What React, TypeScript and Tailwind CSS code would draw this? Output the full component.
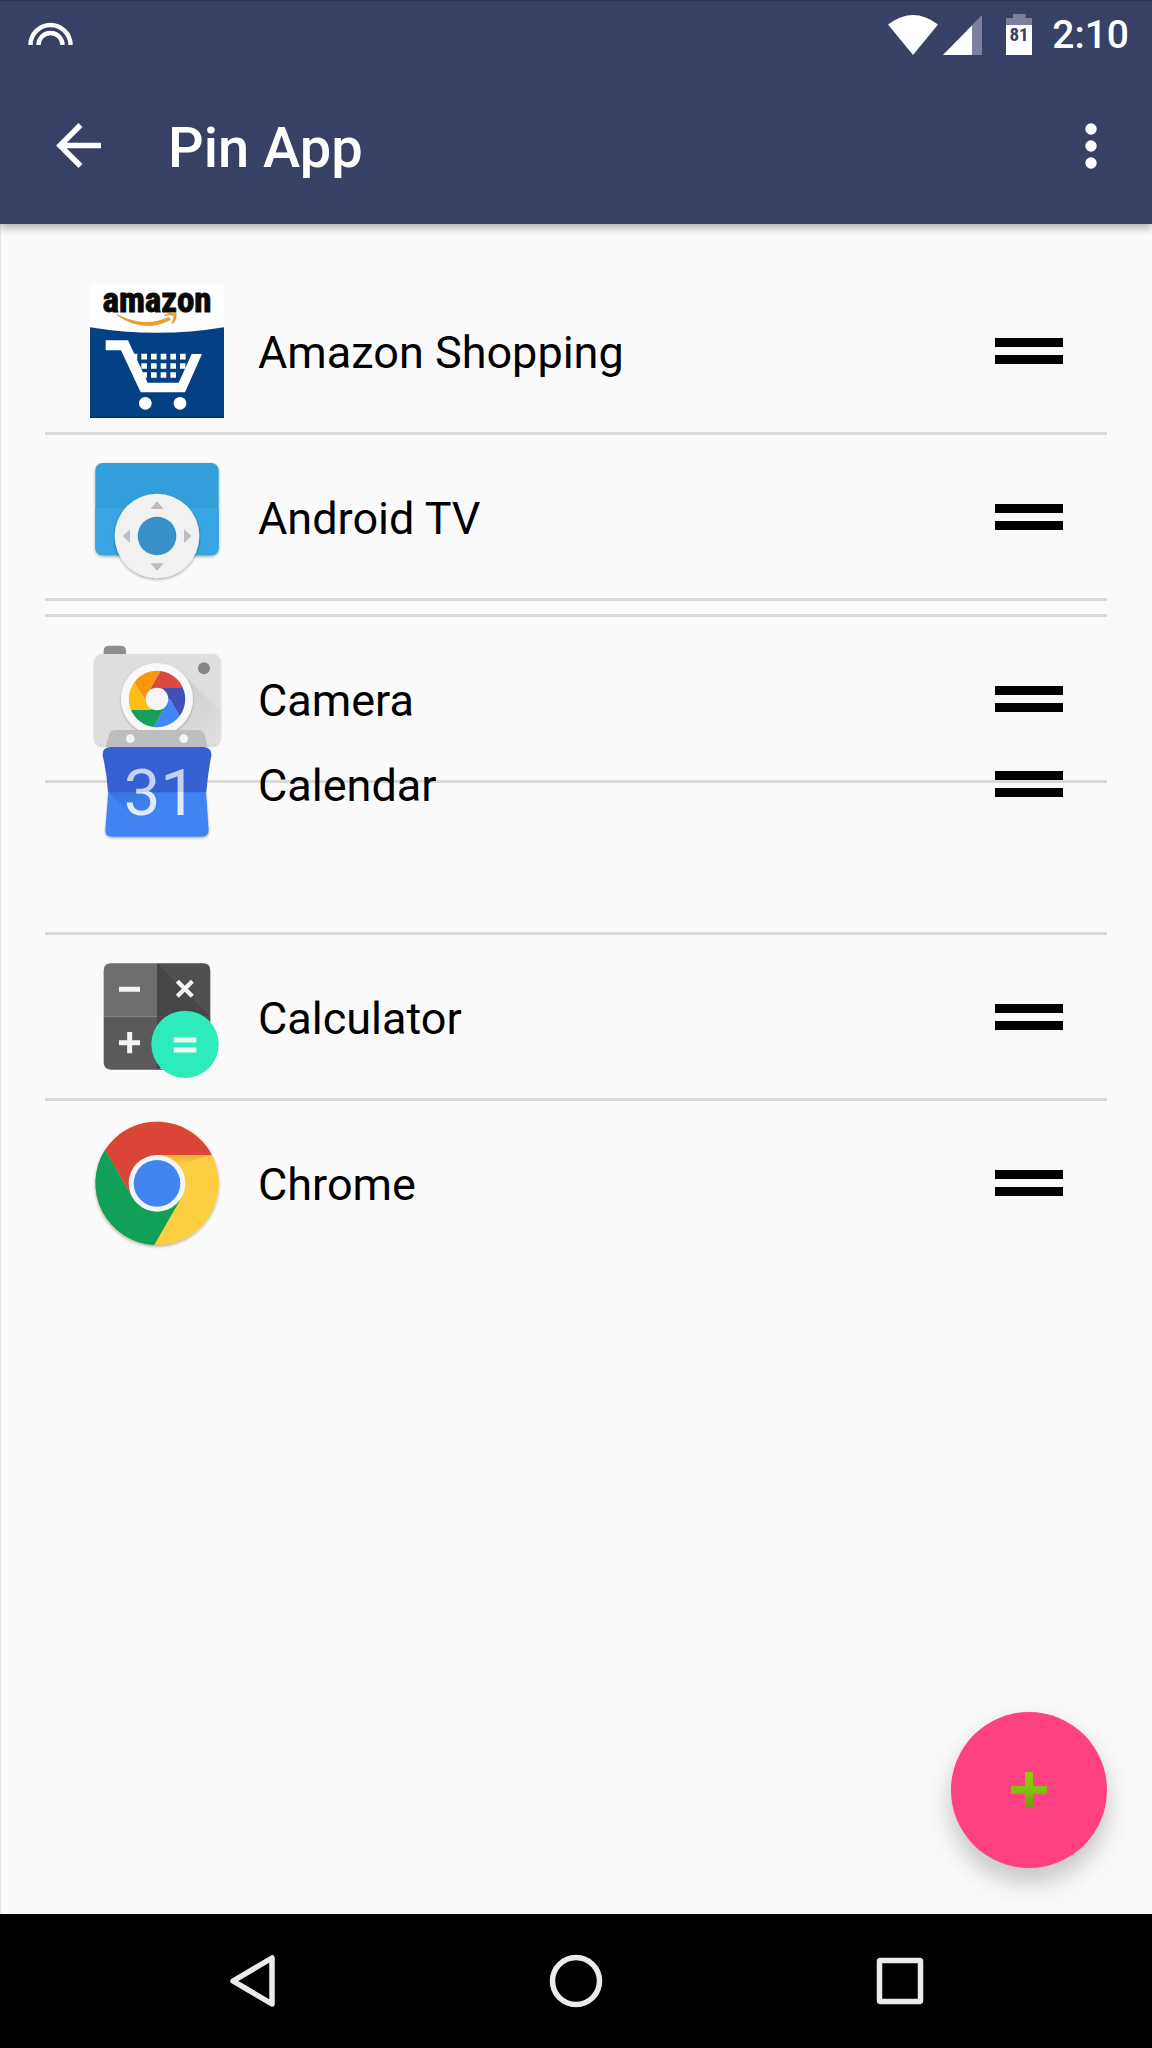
import { useState } from "react";
import type { ReactNode } from "react";

type PinnedApp = {
  id: string;
  name: string;
  icon: ReactNode;
};

const iconClass = "size-[134px] shrink-0 overflow-visible";

function AmazonIcon() {
  return (
    <svg viewBox="150 39 402 402" className={iconClass} aria-hidden="true">
      <rect x="150" y="39" width="402" height="402" fill="#fff" />
      <path d="M150 169 Q351 202 552 169 V441 H150 Z" fill="#044184" />
      <path d="M150 439 H552" stroke="#03295c" strokeWidth="4" />
      <text
        x="351"
        y="122"
        textAnchor="middle"
        fontSize="105"
        fontWeight="700"
        fill="#0a0a0a"
        stroke="#0a0a0a"
        strokeWidth="3"
        style={{ fontFamily: '"Roboto Condensed", Roboto, sans-serif' }}
      >
        amazon
      </text>
      <path d="M231 129 Q312 172 386 138 L393 146 Q309 190 231 133 Z" fill="#e9a02f" />
      <path d="M372 132 Q396 119 410 127 Q412 144 399 159 L394 156 Q402 142 400 134 Q390 131 373 136 Z" fill="#e9a02f" />
      <path d="M197 208 H264 L323 335 H416 L455 249 H486 L435 364 H302 L243 238 H197 Z" fill="#fff" />
      <path
        d="M275 257 H440 M304 285 H436 M304 312 H410"
        stroke="#fff"
        strokeWidth="17"
        strokeDasharray="17 12"
      />
      <circle cx="316" cy="397" r="19" fill="#fff" />
      <circle cx="420" cy="397" r="19" fill="#fff" />
    </svg>
  );
}

function AndroidTvIcon() {
  return (
    <svg viewBox="150 60 402 402" className={iconClass} aria-hidden="true">
      <defs>
        <filter id="tv-shadow" x="-20%" y="-20%" width="140%" height="140%">
          <feDropShadow dx="0" dy="4" stdDeviation="4" floodOpacity="0.35" />
        </filter>
      </defs>
      <rect x="166" y="99" width="370" height="277" rx="22" fill="#329fda" filter="url(#tv-shadow)" />
      <path d="M166 238 H536 V354 Q536 376 514 376 H188 Q166 376 166 354 Z" fill="#36a5e2" />
      <path d="M166 237 H536" stroke="#58b4e6" strokeWidth="2" />
      <circle cx="351" cy="318" r="127" fill="#f1f1f1" filter="url(#tv-shadow)" />
      <circle cx="351" cy="318" r="58" fill="#3891c6" />
      <path
        d="M351 214 L371 237 H331 Z M351 422 L371 400 H331 Z M248 318 L270 298 V339 Z M454 318 L432 298 V339 Z"
        fill="#bdbdbd"
      />
    </svg>
  );
}

const blades = ["#db4a3f", "#3f51b5", "#4286f5", "#16a05c", "#fbc012", "#fb9410"];

function CameraIcon() {
  return (
    <svg viewBox="150 4 402 402" className={iconClass} aria-hidden="true">
      <defs>
        <filter id="camera-shadow" x="-20%" y="-20%" width="140%" height="140%">
          <feDropShadow dx="0" dy="3" stdDeviation="3" floodOpacity="0.3" />
        </filter>
        <linearGradient id="camera-shade" x1="400" y1="200" x2="510" y2="330" gradientUnits="userSpaceOnUse">
          <stop offset="0" stopColor="#d0d0d0" />
          <stop offset="1" stopColor="#dedede" />
        </linearGradient>
      </defs>
      <path d="M191 74 V61 Q191 45 207 45 H242 Q258 45 258 61 V74 Z" fill="#8e8e8e" />
      <rect x="163" y="70" width="378" height="274" rx="24" fill="#dedede" filter="url(#camera-shadow)" />
      <path d="M428 129 L541 240 V320 Q541 344 517 344 H480 L300 295 Z" fill="url(#camera-shade)" />
      <circle cx="492" cy="113" r="18" fill="#858585" />
      <circle cx="351" cy="205" r="108" fill="#f8f8f8" filter="url(#camera-shadow)" />
      {blades.map((color, index) => (
        <path
          key={color}
          d="M351 205 L332 172 L361 121 A85 85 0 0 1 429 172 L370 172 Z"
          fill={color}
          transform={`rotate(${index * 60} 351 205)`}
        />
      ))}
      <circle cx="351" cy="205" r="34" fill="#f5f5f5" />
    </svg>
  );
}

function CalendarIcon() {
  return (
    <svg viewBox="150 260 402 402" className={iconClass} aria-hidden="true">
      <defs>
        <linearGradient id="calendar-digits" x1="0" y1="415" x2="0" y2="555" gradientUnits="userSpaceOnUse">
          <stop offset="0.5" stopColor="#c3d2f4" />
          <stop offset="0.5" stopColor="#e0ebfd" />
        </linearGradient>
        <linearGradient id="calendar-fold" x1="205" y1="484" x2="290" y2="590" gradientUnits="userSpaceOnUse">
          <stop offset="0" stopColor="#3a73dd" />
          <stop offset="1" stopColor="#4183f3" />
        </linearGradient>
        <filter id="calendar-shadow" x="-20%" y="-20%" width="140%" height="140%">
          <feDropShadow dx="0" dy="4" stdDeviation="3" floodOpacity="0.3" />
        </filter>
      </defs>
      <path d="M197 350 L206 316 Q211 299 228 299 H472 Q490 299 495 316 L503 350 Z" fill="#bebebe" />
      <circle cx="271" cy="325" r="13" fill="#f4f4f4" />
      <circle cx="431" cy="325" r="13" fill="#f4f4f4" />
      <path
        d="M205 484 L196 598 Q195 619 216 619 H484 Q507 619 506 598 L498 484 Z"
        fill="#4183f3"
        filter="url(#calendar-shadow)"
      />
      <path d="M205 484 L305 584 L400 484 Z" fill="url(#calendar-fold)" />
      <path d="M210 350 H492 Q516 352 514 376 Q504 425 499 486 H204 Q200 425 188 376 Q186 352 210 350 Z" fill="#3460d1" />
      <text
        x="251"
        y="555"
        fontSize="196"
        fill="url(#calendar-digits)"
        style={{ fontFamily: "Roboto, sans-serif" }}
      >
        31
      </text>
    </svg>
  );
}

function CalculatorIcon() {
  return (
    <svg viewBox="150 88 402 402" className={iconClass} aria-hidden="true">
      <path d="M351 128 V288 H191 V150 Q191 128 213 128 Z" fill="#6e6e6e" />
      <path d="M351 128 H489 Q511 128 511 150 V288 H351 Z" fill="#505050" />
      <path d="M351 128 L511 288 H351 Z" fill="#464646" />
      <path d="M191 288 H351 V447 H213 Q191 447 191 425 Z" fill="#5a5a5a" />
      <path d="M237 206 H300 M237 366 H300 M269 334 V398" stroke="#f4f4f4" strokeWidth="15" />
      <path d="M412 182 L457 227 M457 182 L412 227" stroke="#f4f4f4" strokeWidth="13" />
      <path d="M351 288 H511 V371 L351 447 Z" fill="#484848" />
      <path d="M351 440 V447 H372 Z" fill="#484848" />
      <circle cx="435" cy="371" r="101" fill="#2eebbb" />
      <path d="M401 358 H469 M401 388 H469" stroke="#e3fdf6" strokeWidth="15" />
    </svg>
  );
}

function ChromeIcon() {
  const sectors = ["#db4538", "#fece42", "#10a05a"];
  return (
    <svg viewBox="150 76 402 402" className={iconClass} aria-hidden="true">
      <defs>
        <filter id="chrome-shadow" x="-20%" y="-20%" width="140%" height="140%">
          <feDropShadow dx="0" dy="4" stdDeviation="4" floodOpacity="0.35" />
        </filter>
        <linearGradient id="chrome-fade" x1="0" y1="193" x2="0" y2="222" gradientUnits="userSpaceOnUse">
          <stop offset="0" stopColor="#e9b235" />
          <stop offset="1" stopColor="#fece42" />
        </linearGradient>
      </defs>
      <circle cx="351" cy="278" r="185" fill="#fece42" filter="url(#chrome-shadow)" />
      {sectors.map((color, index) => (
        <path
          key={color}
          d="M351 278 L277 320 L195 178 A186 186 0 0 1 516 193 L351 193 Z"
          fill={color}
          transform={`rotate(${index * 120} 351 278)`}
        />
      ))}
      <path d="M365 193 H514 L415 224 Z" fill="url(#chrome-fade)" />
      <circle cx="351" cy="278" r="85" fill="#f3f5f7" />
      <circle cx="351" cy="278" r="70" fill="#4384f3" />
    </svg>
  );
}

const apps: Record<string, PinnedApp> = {
  amazon: { id: "amazon", name: "Amazon Shopping", icon: <AmazonIcon /> },
  tv: { id: "tv", name: "Android TV", icon: <AndroidTvIcon /> },
  camera: { id: "camera", name: "Camera", icon: <CameraIcon /> },
  calendar: { id: "calendar", name: "Calendar", icon: <CalendarIcon /> },
  calculator: { id: "calculator", name: "Calculator", icon: <CalculatorIcon /> },
  chrome: { id: "chrome", name: "Chrome", icon: <ChromeIcon /> },
};

function AppRow({ app }: { app: PinnedApp }) {
  return (
    <div className="flex h-[163px] items-center pr-11 pl-[45px]">
      {app.icon}
      <span className="ml-[34px] flex-1 pt-1 text-[45px] leading-[56px] text-black">{app.name}</span>
      <button type="button" aria-label={`Move ${app.name}`} className="flex w-[68px] flex-col gap-2 py-4">
        <span className="h-[9px] w-full bg-black" />
        <span className="h-[9px] w-full bg-black" />
      </button>
    </div>
  );
}

function StatusBar() {
  return (
    <div className="flex h-[67px] items-start justify-between pr-[23px] pl-7">
      <svg viewBox="0 0 45 23" className="mt-[22px] h-[23px] w-[45px]" fill="none" stroke="#fff" strokeWidth="4.4" aria-hidden="true">
        <path d="M2.5 23 A20 20 0 0 1 42.5 23" />
        <path d="M10.5 23 A12 12 0 0 1 34.5 23" />
      </svg>
      <div className="flex items-center pt-[10px]">
        <svg viewBox="0 0 50 40" className="h-10 w-[50px]" aria-hidden="true">
          <path d="M0 9.5 Q25 -9.5 50 9.5 L25 40 Z" fill="#fff" />
        </svg>
        <svg viewBox="0 0 39 40" className="ml-[5px] h-10 w-[39px]" aria-hidden="true">
          <path d="M39 0 V40 H0 Z" fill="#7d7f9c" />
          <path d="M29 10.5 V40 H0 Z" fill="#fff" />
        </svg>
        <svg viewBox="0 0 26 41" className="ml-6 h-[41px] w-[26px]" aria-hidden="true">
          <path d="M7 0 H19.5 V4 H26 V11 H0 V4 H7 Z" fill="#7d7f9c" />
          <path d="M0 11 H26 V41 H0 Z" fill="#fff" />
          <text
            x="13"
            y="27"
            textAnchor="middle"
            fontSize="19"
            fontWeight="700"
            fill="#394064"
            style={{ fontFamily: '"Roboto Condensed", Roboto, sans-serif' }}
          >
            81
          </text>
        </svg>
        <span className="ml-5 pt-px text-[39px] leading-[48px] font-medium">2:10</span>
      </div>
    </div>
  );
}

function AppBar() {
  return (
    <div className="flex h-[157px] items-center pr-11 pl-14">
      <button type="button" aria-label="Back">
        <svg viewBox="0 0 45 45" className="size-[45px]" fill="none" stroke="#fff" strokeWidth="5.5" aria-hidden="true">
          <path d="M45 22.5 H5 M24.5 2 L4 22.5 L24.5 43" />
        </svg>
      </button>
      <h1 className="ml-[67px] flex-1 pt-1 text-[56px] leading-[68px] font-medium">Pin App</h1>
      <button type="button" aria-label="More options" className="px-[11px]">
        <svg viewBox="0 0 12 46" className="h-[46px] w-3" fill="#fff" aria-hidden="true">
          <circle cx="6" cy="6" r="5.7" />
          <circle cx="6" cy="23" r="5.7" />
          <circle cx="6" cy="40" r="5.7" />
        </svg>
      </button>
    </div>
  );
}

function NavigationBar() {
  return (
    <nav className="grid h-[134px] grid-cols-3 place-items-center bg-black px-[90px]">
      <button type="button" aria-label="Back">
        <svg viewBox="0 0 54 54" className="size-[54px]" fill="none" stroke="#ebebeb" strokeWidth="5.5" strokeLinejoin="round" aria-hidden="true">
          <path d="M47 4 V50 L8 27 Z" />
        </svg>
      </button>
      <button type="button" aria-label="Home">
        <svg viewBox="0 0 54 54" className="size-[54px]" fill="none" stroke="#ebebeb" strokeWidth="5.5" aria-hidden="true">
          <circle cx="27" cy="27" r="23.5" />
        </svg>
      </button>
      <button type="button" aria-label="Recent apps">
        <svg viewBox="0 0 54 54" className="size-[54px]" fill="none" stroke="#ebebeb" strokeWidth="5.5" aria-hidden="true">
          <rect x="6.500" y="6.500" width="41" height="41" rx="1" />
        </svg>
      </button>
    </nav>
  );
}

export default function App() {
  const [dragged] = useState<PinnedApp>(apps.calendar);

  return (
    <div className="relative flex min-h-screen flex-col bg-[#fafafa] font-[Roboto,sans-serif]">
      <header className="relative border-t border-[#2b3259] bg-[#394065] text-white shadow-[0_3px_9px_rgba(0,0,0,0.35)]">
        <div className="-mt-px">
          <StatusBar />
          <AppBar />
        </div>
      </header>

      <main className="flex-1 border-l border-[#e4e4e4] pt-[45px]">
        <ul className="mr-[45px] ml-11">
          <li className="border-b-3 border-[#dadada]">
            <AppRow app={apps.amazon} />
          </li>
          <li className="border-b-3 border-[#dadada]">
            <AppRow app={apps.tv} />
          </li>
          <li className="mt-[13px] border-y-3 border-[#dadada]">
            <AppRow app={apps.camera} />
          </li>
          {/* Empty slot under the row that is being dragged */}
          <li className="relative h-[152px] border-b-3 border-[#dadada]">
            <div className="absolute inset-x-0 -top-[81px]">
              <AppRow app={dragged} />
            </div>
          </li>
          <li className="border-b-3 border-[#dadada]">
            <AppRow app={apps.calculator} />
          </li>
          <li>
            <AppRow app={apps.chrome} />
          </li>
        </ul>
      </main>

      <button
        type="button"
        aria-label="Add app"
        className="absolute right-[45px] bottom-[180px] flex size-[156px] items-center justify-center rounded-full bg-[#ff4181] shadow-[0_14px_26px_rgba(0,0,0,0.22)]"
      >
        <svg viewBox="0 0 36 36" className="size-9" aria-hidden="true">
          <defs>
            <linearGradient id="plus-fill" x1="0" y1="0" x2="0" y2="1">
              <stop offset="0" stopColor="#97cb0c" />
              <stop offset="0.5" stopColor="#7fc209" />
              <stop offset="1" stopColor="#6f9c12" />
            </linearGradient>
          </defs>
          <path d="M14 0 H22 V14 H36 V22 H22 V36 H14 V22 H0 V14 H14 Z" fill="url(#plus-fill)" />
        </svg>
      </button>

      <NavigationBar />
    </div>
  );
}
